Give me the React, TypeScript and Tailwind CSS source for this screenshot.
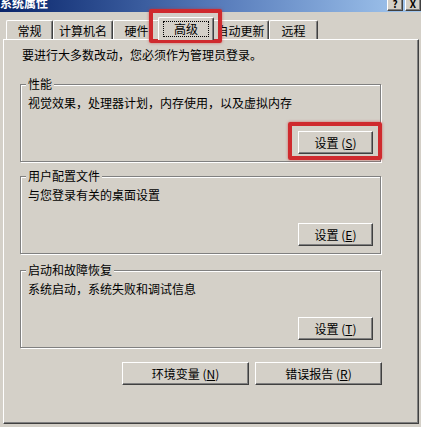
const raised =
  'border-t border-l border-white border-r border-b border-r-[#404040] border-b-[#404040] shadow-[inset_-1px_-1px_0_#808080]';

function Btn({ label, hot, width = 'w-[75px]' }: { label: string; hot: string; width?: string }) {
  return (
    <div className={`${width} h-[23px] bg-[#d4d0c8] ${raised} flex items-center justify-center`}>
      <span>
        {label} (<span className="underline underline-offset-1">{hot}</span>)
      </span>
    </div>
  );
}

function Tab({ label, w, selected = false }: { label: string; w: string; selected?: boolean }) {
  if (selected) {
    return (
      <div
        className={`${w} h-[23px] -mx-[2px] -mb-[1px] z-10 bg-[#d4d0c8] border-t border-l border-white border-r border-r-[#404040] shadow-[inset_-1px_0_0_#808080] rounded-t-[2px] flex justify-center pt-[3px]`}
      >
        <div className="h-[16px] px-[10px] border border-dotted border-black flex items-center">{label}</div>
      </div>
    );
  }
  return (
    <div
      className={`${w} h-[19px] bg-[#d4d0c8] border-t border-l border-white border-r border-r-[#404040] shadow-[inset_-1px_0_0_#808080] rounded-t-[2px] flex justify-center pt-[3px]`}
    >
      {label}
    </div>
  );
}

function Group({ title, text, hot, className = '' }: { title: string; text: string; hot: string; className?: string }) {
  return (
    <div
      className={`relative w-[361px] h-[78px] border border-[#808080] shadow-[1px_1px_0_#fff,inset_1px_1px_0_#fff] flex flex-col pl-[7px] pr-[7px] pt-[11px] pb-[7px] ${className}`}
    >
      <div className="absolute -top-[8px] left-[5px] px-[2px] bg-[#d4d0c8]">{title}</div>
      <div>{text}</div>
      <div className="mt-auto self-end">
        <Btn label="设置" hot={hot} />
      </div>
    </div>
  );
}

export default function App() {
  return (
    <div className="relative w-[421px] h-[427px] overflow-hidden bg-[#d4d0c8] text-black text-[12px] leading-[14px] font-['Noto_Sans_CJK_SC','Noto_Sans',sans-serif]">
      {/* title bar, clipped at the top */}
      <div className="h-[12px] overflow-hidden flex justify-between bg-linear-to-r from-[#0a246a] via-[#5478b8] to-[#a6caf0]">
        <span className="block -mt-[4px] leading-[14px] font-bold text-white">系统属性</span>
        <div className="flex gap-[2px] -mt-[3px] pr-0">
          <div className={`w-[16px] h-[14px] bg-[#d4d0c8] ${raised} flex items-center justify-center text-[10px] font-bold leading-none`}>?</div>
          <div className={`w-[16px] h-[14px] bg-[#d4d0c8] ${raised} flex items-center justify-center text-[10px] font-bold leading-none`}>X</div>
        </div>
      </div>

      {/* tabs */}
      <div className="h-[27px] flex items-end pl-[6px]">
        <Tab label="常规" w="w-[47px]" />
        <Tab label="计算机名" w="w-[60px]" />
        <Tab label="硬件" w="w-[47px]" />
        <Tab label="高级" w="w-[56px]" selected />
        <Tab label="自动更新" w="w-[57px]" />
        <Tab label="远程" w="w-[49px]" />
      </div>

      {/* tab panel */}
      <div className="ml-[3px] w-[416px] h-[385px] border-t border-l border-white border-r border-b border-r-[#404040] border-b-[#404040] shadow-[inset_-1px_-1px_0_#808080] pt-[8px] pl-[16px]">
        <div className="pl-[2px]">要进行大多数改动，您必须作为管理员登录。</div>
        <Group className="mt-[22px] h-[77px]" title="性能" text="视觉效果，处理器计划，内存使用，以及虚拟内存" hot="S" />
        <Group className="mt-[14px]" title="用户配置文件" text="与您登录有关的桌面设置" hot="E" />
        <Group className="mt-[16px]" title="启动和故障恢复" text="系统启动，系统失败和调试信息" hot="T" />
        <div className="mt-[14px] w-[362px] flex justify-end gap-[6px]">
          <Btn label="环境变量" hot="N" width="w-[127px]" />
          <Btn label="错误报告" hot="R" width="w-[127px]" />
        </div>
      </div>

      {/* red annotation boxes */}
      <div className="absolute left-[149px] top-[9px] w-[73px] h-[34px] border-[4px] border-[#cf2a2e] rounded-[2px] shadow-[0_0_3px_rgba(200,40,40,0.6)]" />
      <div className="absolute left-[288px] top-[122px] w-[94px] h-[38px] border-[4px] border-[#cf2a2e] rounded-[2px] shadow-[0_0_3px_rgba(200,40,40,0.6)]" />
    </div>
  );
}
